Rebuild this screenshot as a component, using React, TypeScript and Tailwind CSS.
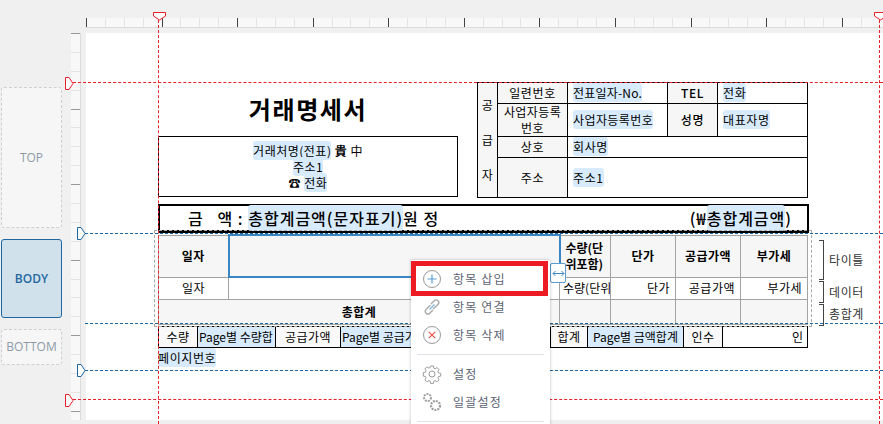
import React from "react";

const font = { fontFamily: '"Noto Sans CJK KR", "Noto Sans", sans-serif' };

const H = ({ children }: { children: React.ReactNode }) => (
  <span className="rounded-[3px] bg-[#d8ebfc] py-[1px]">{children}</span>
);

function TopRuler() {
  return (
    <div className="flex h-[10px] shrink-0 overflow-hidden border-b border-[#dcdcdc] bg-[#f8f8f8]">
      {Array.from({ length: 43 }).map((_, i) => (
        <div
          key={i}
          className={
            i % 4 === 0
              ? "h-full w-[18.9px] shrink-0 border-l border-[#444]"
              : "h-full w-[18.9px] shrink-0 border-l border-[#e4e4e4]"
          }
        />
      ))}
    </div>
  );
}

function LeftRuler() {
  return (
    <div className="h-[387px] w-[10px] shrink-0 overflow-hidden border-r border-[#dcdcdc] bg-[#f8f8f8]">
      {Array.from({ length: 21 }).map((_, i) => (
        <div
          key={i}
          className={
            i % 4 === 0
              ? "h-[18.9px] border-t border-[#999]"
              : "h-[18.9px] border-t border-[#e4e4e4]"
          }
        />
      ))}
    </div>
  );
}

function Side() {
  return (
    <div className="ml-[1px] flex w-[61px] shrink-0 flex-col gap-[11px] pt-[54px] font-['Open_Sans'] text-[12px]">
      <div className="flex h-[141px] items-center justify-center rounded-[3px] border border-dashed border-[#cfcfcf] bg-[#f6f6f6] text-[#8d9aa8]">
        TOP
      </div>
      <div className="flex h-[79px] items-center justify-center rounded-[3px] border border-[#1d669f] bg-[#d1e1ec] font-semibold text-[#23679f]">
        BODY
      </div>
      <div className="flex h-[36px] items-center justify-center rounded-[3px] border border-dashed border-[#cfcfcf] bg-[#f6f6f6] text-[#8d9aa8]">
        BOTTOM
      </div>
    </div>
  );
}

function Supplier() {
  const b = "border border-black p-0 text-center align-middle";
  const l = `${b} bg-[#f6f6f6]`;
  const v = `${b} pl-[5px] text-left`;
  return (
    <table className="h-[115px] w-[330px] table-fixed border-collapse text-[12px] leading-[16px] tracking-[0.6px]">
      <colgroup>
        <col className="w-[20px]" />
        <col className="w-[70px]" />
        <col className="w-[100px]" />
        <col className="w-[50px]" />
        <col className="w-[90px]" />
      </colgroup>
      <tbody>
        <tr className="h-[21px]">
          <td rowSpan={4} className={l}>
            <div className="flex h-[112px] flex-col items-center justify-around py-[3px]">
              <span>공</span>
              <span>급</span>
              <span>자</span>
            </div>
          </td>
          <td className={l}>일련번호</td>
          <td className={`${v} tracking-[0.2px]`}>
            <H>전표일자-No.</H>
          </td>
          <td className={`${l} font-medium`}>TEL</td>
          <td className={v}>
            <H>전화</H>
          </td>
        </tr>
        <tr className="h-[33px]">
          <td className={`${l} tracking-[0.4px]`}>
            사업자등록
            <br />
            번호
          </td>
          <td className={`${v} tracking-[0.4px]`}>
            <H>사업자등록번호</H>
          </td>
          <td className={`${l} font-medium`}>성명</td>
          <td className={v}>
            <H>대표자명</H>
          </td>
        </tr>
        <tr className="h-[21px]">
          <td className={l}>상호</td>
          <td colSpan={3} className={v}>
            <H>회사명</H>
          </td>
        </tr>
        <tr className="h-[40px]">
          <td className={l}>주소</td>
          <td colSpan={3} className={v}>
            <H>주소1</H>
          </td>
        </tr>
      </tbody>
    </table>
  );
}

function Header() {
  return (
    <div className="flex h-[115px] w-[650px] gap-[19px]">
      <div className="flex w-[300px] flex-col">
        <div className="flex h-[54px] items-center justify-center text-[24px] font-bold tracking-[1.6px] text-black">
          거래명세서
        </div>
        <div className="flex h-[61px] flex-col items-center justify-center border border-black text-[12px] leading-[16px] tracking-[0.5px]">
          <div>
            <H>거래처명(전표)</H> <span className="font-bold">貴</span> 中
          </div>
          <div>
            <H>주소1</H>
          </div>
          <div>
            ☎ <H>전화</H>
          </div>
        </div>
      </div>
      <Supplier />
    </div>
  );
}

function Amount() {
  return (
    <div className="mt-[7px] flex h-[29px] w-[651px] items-center justify-between border-2 border-b-[3px] border-black pl-[28px] pr-[15px] text-[16px] font-medium tracking-[1px]">
      <div className="whitespace-pre">
        금   액 : <H>총합계금액(문자표기)</H>원 정
      </div>
      <div>
        (₩<H>총합계금액</H>)
      </div>
    </div>
  );
}

function BodyTable() {
  const b = "overflow-hidden whitespace-nowrap border border-[#a3a3a3] p-0 align-middle";
  const h = `${b} bg-[#f6f6f6] text-center font-bold`;
  const r = `${b} pr-[5px] text-right`;
  return (
    <table className="mt-[1px] h-[89px] w-[649px] table-fixed border-collapse text-[12px] leading-[16px] tracking-[0.5px]">
      <colgroup>
        <col className="w-[70px]" />
        <col className="w-[331px]" />
        <col className="w-[51px]" />
        <col className="w-[65px]" />
        <col className="w-[65px]" />
        <col className="w-[67px]" />
      </colgroup>
      <tbody>
        <tr className="h-[42px]">
          <td className={h}>일자</td>
          <td className="border-2 border-[#3a86c3] bg-[#f6f6f6] p-0" />
          <td className={`${b} whitespace-normal bg-[#f6f6f6] pl-[5px] text-left font-bold tracking-normal`}>
            수량(단
            <br />
            위포함)
          </td>
          <td className={h}>단가</td>
          <td className={h}>공급가액</td>
          <td className={h}>부가세</td>
        </tr>
        <tr className="h-[22px]">
          <td className={`${b} text-center`}>일자</td>
          <td className={b} />
          <td className={`${b} pl-[3px] tracking-normal`}>수량(단위</td>
          <td className={r}>단가</td>
          <td className={r}>공급가액</td>
          <td className={r}>부가세</td>
        </tr>
        <tr className="h-[25px]">
          <td colSpan={2} className={h}>
            총합계
          </td>
          <td className={h} />
          <td className={h} />
          <td className={h} />
          <td className={h} />
        </tr>
      </tbody>
    </table>
  );
}

function FooterRow() {
  const b = "overflow-hidden whitespace-nowrap border border-black p-0 text-center align-middle";
  const l = `${b} bg-[#f9f9f9] tracking-[0.5px]`;
  return (
    <table className="mt-[1px] h-[22px] w-[649px] table-fixed border-collapse text-[12px] leading-[16px]">
      <colgroup>
        <col className="w-[39px]" />
        <col className="w-[78px]" />
        <col className="w-[65px]" />
        <col className="w-[105px]" />
        <col className="w-[105px]" />
        <col className="w-[37px]" />
        <col className="w-[96px]" />
        <col className="w-[39px]" />
        <col className="w-[85px]" />
      </colgroup>
      <tbody>
        <tr>
          <td className={l}>수량</td>
          <td className={`${b} bg-[#d8ebfc] pl-[1px] text-left`}>Page별 수량합</td>
          <td className={l}>공급가액</td>
          <td className={`${b} bg-[#d8ebfc] pl-[1px] text-left`}>Page별 공급가액합</td>
          <td className={l} />
          <td className={l}>합계</td>
          <td className={`${b} bg-[#d8ebfc]`}>Page별 금액합계</td>
          <td className={`${l} bg-[#f6f6f6]`}>인수</td>
          <td className={`${b} pr-[4px] text-right`}>인</td>
        </tr>
      </tbody>
    </table>
  );
}

function Marker({ kind, x, y, color }: { kind: "top" | "left"; x: number; y: number; color: string }) {
  return kind === "top" ? (
    <svg className="absolute" style={{ left: x, top: y }} width="13" height="9" viewBox="0 0 13 9">
      <path d="M.5.5h12v3.500L6.500 8 .5 4z" fill="#fff" stroke={color} strokeWidth="1" />
    </svg>
  ) : (
    <svg className="absolute" style={{ left: x, top: y }} width="9" height="13" viewBox="0 0 9 13">
      <path d="M.5.5H4L8 6.500 4 12.500H.5z" fill="#fff" stroke={color} strokeWidth="1" />
    </svg>
  );
}

function Guides() {
  const red = "#e8202a";
  const blue = "#1d669f";
  return (
    <>
      <div className="absolute left-[158px] top-[20px] h-[404px] border-l border-dashed border-[#e8202a]" />
      <div className="absolute left-[879px] top-[20px] h-[404px] border-l border-dashed border-[#e8202a]" />
      <div className="absolute left-[73px] top-[82px] w-[810px] border-t border-dashed border-[#e8202a]" />
      <div className="absolute left-[73px] top-[399px] w-[810px] border-t border-dashed border-[#e8202a]" />
      <div className="absolute left-[85px] top-[233px] w-[798px] border-t border-dashed border-[#1d669f]" />
      <div className="absolute left-[85px] top-[323px] w-[798px] border-t border-dashed border-[#1d669f]" />
      <div className="absolute left-[85px] top-[370px] w-[798px] border-t border-dashed border-[#1d669f]" />
      <div className="absolute left-[154px] top-[230px] h-[97px] w-[658px] border border-dashed border-[#a8a8a8]" />
      <Marker kind="top" x={153} y={12} color={red} />
      <Marker kind="top" x={874} y={12} color={red} />
      <Marker kind="left" x={65} y={77} color={red} />
      <Marker kind="left" x={65} y={394} color={red} />
      <Marker kind="left" x={77} y={227} color={blue} />
      <Marker kind="left" x={77} y={364} color={blue} />
    </>
  );
}

function Bracket({ top, height }: { top: string; height: string }) {
  return <div className={`absolute left-[819px] w-[5px] border-y border-r border-[#444] ${top} ${height}`} />;
}

function SideLabels() {
  const c = "absolute left-[829px] text-[12px] leading-[16px] tracking-[0.6px] text-[#333]";
  return (
    <>
      <Bracket top="top-[240px]" height="h-[40px]" />
      <Bracket top="top-[281px]" height="h-[22px]" />
      <Bracket top="top-[304px]" height="h-[22px]" />
      <div className={`${c} top-[252px]`}>타이틀</div>
      <div className={`${c} top-[284px]`}>데이터</div>
      <div className={`${c} top-[306px]`}>총합계</div>
    </>
  );
}

const Icon = ({ children }: { children: React.ReactNode }) => (
  <svg width="20" height="20" viewBox="0 0 20 20" fill="none" className="shrink-0">
    {children}
  </svg>
);

const gear =
  "M8.600 2h2.800l.4 2.200 1.400.6 1.900-1.200 2 2-1.200 1.900.6 1.400 2.200.4v2.800l-2.200.4-.6 1.400 1.200 1.900-2 2-1.900-1.200-1.400.6-.4 2.200H8.600l-.4-2.200-1.400-.6-1.900 1.200-2-2 1.200-1.900-.6-1.400-2.200-.4V8.600l2.200-.4.6-1.400-1.200-1.900 2-2 1.900 1.200 1.400-.6z";

function MenuItem({ icon, label }: { icon: React.ReactNode; label: string }) {
  return (
    <div className="flex h-[28px] items-center gap-[11px] pl-[11px] text-[12px] tracking-[1.200px] text-[#5c6372]">
      {icon}
      <span>{label}</span>
    </div>
  );
}

function Menu() {
  return (
    <div className="absolute left-[411px] top-[260px] h-[170px] w-[139px] bg-white pt-[5px] shadow-[0_0_3px_rgba(0,0,0,0.25)]">
      <MenuItem
        label="항목 삽입"
        icon={
          <Icon>
            <circle cx="10" cy="10" r="8.500" stroke="#9a9a9a" />
            <path d="M10 5.500v9M5.500 10h9" stroke="#5aa0d8" strokeWidth="1.200" />
          </Icon>
        }
      />
      <MenuItem
        label="항목 연결"
        icon={
          <Icon>
            <path d="M8.500 8 4 12.500a2.600 2.600 0 0 0 3.700 3.700L11 13" stroke="#a8a8a8" strokeWidth="1.400" />
            <path d="M11 12l5-4.500a2.600 2.600 0 0 0-3.700-3.700L9 7" stroke="#a8a8a8" strokeWidth="1.400" />
            <path d="M7.500 12.500l5-5" stroke="#7db4e0" strokeWidth="1.200" />
          </Icon>
        }
      />
      <MenuItem
        label="항목 삭제"
        icon={
          <Icon>
            <circle cx="10" cy="10" r="8.500" stroke="#9a9a9a" />
            <path d="M6.800 6.800l6.400 6.400M13.200 6.800l-6.400 6.400" stroke="#f0504a" strokeWidth="1.200" />
          </Icon>
        }
      />
      <div className="mx-[6px] my-[5px] border-t border-[#dfe0e8]" />
      <MenuItem
        label="설정"
        icon={
          <Icon>
            <path d={gear} stroke="#9a9a9a" />
            <circle cx="10" cy="10" r="3" stroke="#9a9a9a" />
          </Icon>
        }
      />
      <MenuItem
        label="일괄설정"
        icon={
          <Icon>
            <circle cx="5.500" cy="5.500" r="3.500" stroke="#a0a0a0" strokeWidth="2" strokeDasharray="2 1" />
            <circle cx="13.500" cy="13.500" r="4.500" stroke="#a0a0a0" strokeWidth="2.200" strokeDasharray="2 1" />
          </Icon>
        }
      />
      <div className="mx-[6px] my-[5px] border-t border-[#dfe0e8]" />
      <div className="absolute left-0 top-[1px] h-[35px] w-[137px] border-[5px] border-[#ed1c24]" />
    </div>
  );
}

function Handle() {
  return (
    <div className="absolute left-[550px] top-[263px] flex h-[20px] w-[16px] items-center justify-center rounded-[2px] border border-[#5a9bd0] bg-white">
      <svg width="13" height="7" viewBox="0 0 13 7" fill="none">
        <path d="M1 3.500h11M3.500 1 1 3.500 3.500 6M9.500 1 12 3.500 9.500 6" stroke="#3a86c3" />
      </svg>
    </div>
  );
}

export default function App() {
  return (
    <div
      className="relative flex h-[424px] w-[883px] flex-col overflow-hidden bg-[#f0f0f0] text-black"
      style={font}
    >
      <div className="pl-[86px] pt-[18px]">
        <TopRuler />
      </div>
      <div className="mt-[5px] flex">
        <Side />
        <div className="ml-[9px]">
          <LeftRuler />
        </div>
        <div className="ml-[5px] h-[387px] flex-1 bg-white pl-[72px] pt-[49px]">
          <Header />
          <Amount />
          <BodyTable />
          <FooterRow />
          <div className="mt-[2px] text-[12px] leading-[16px] tracking-[0.6px]">
            <H>페이지번호</H>
          </div>
        </div>
      </div>
      <Guides />
      <SideLabels />
      <Handle />
      <Menu />
    </div>
  );
}
